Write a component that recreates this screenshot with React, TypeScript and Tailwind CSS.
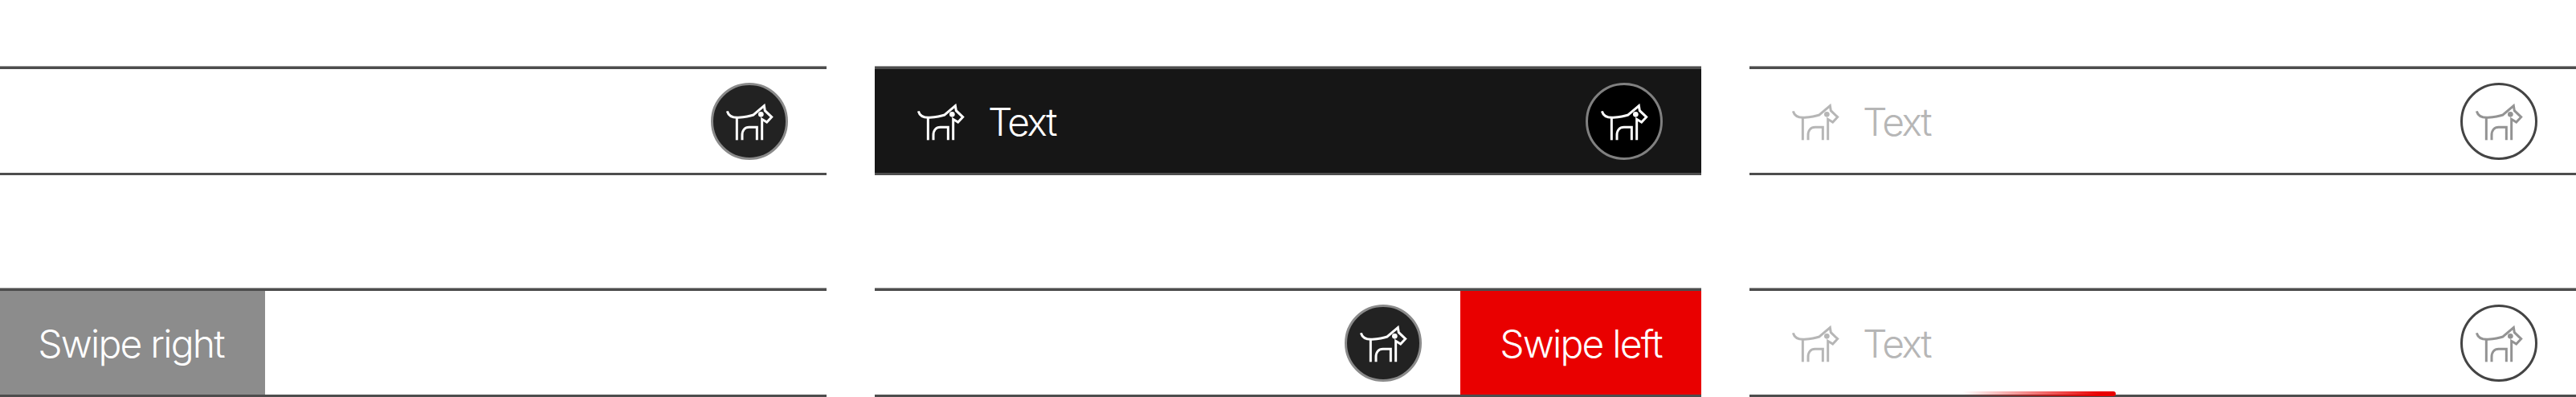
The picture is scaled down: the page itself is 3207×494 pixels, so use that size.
const Dog = ({ className }: { className: string }) => {
  return (
    <svg
      className={className}
      xmlns="http://www.w3.org/2000/svg"
      viewBox="185 170 180 144"
      width="60"
      height="48"
      fill="none"
      stroke="currentColor"
      strokeWidth="9"
    >
      <path d="M192 204 C197 222 214 229 234 228 C255 226 272 224 290 218 L330 184 L333 202 L358 226 L340 245 L322 234 V312" />
      <path d="M228 228 V312" />
      <path d="M248 312 V294 C248 275 258 264 274 264 H303 V312" />
      <circle cx="318" cy="216" r="10" fill="currentColor" stroke="none" />
    </svg>
  );
};

const Round = ({ tone }: { tone: "dark" | "black" | "light" }) => {
  const circle = {
    dark: "border-[#8a8a8a] bg-[#222222]",
    black: "border-[#808080] bg-black",
    light: "border-[#444444] bg-white",
  }[tone];
  return (
    <div
      className={`flex h-[96px] w-[96px] shrink-0 items-center justify-center rounded-full border-[3px] ${circle}`}
    >
      <Dog className={tone === "light" ? "text-[#939393]" : "text-white"} />
    </div>
  );
};

const Label = ({ dark }: { dark: boolean }) => {
  return (
    <div className="flex items-center gap-[29px]">
      <Dog className={dark ? "text-white" : "text-[#b6b6b6]"} />
      <span
        className={`pt-[2px] text-[48px] leading-none font-light tracking-[-2.5px] ${
          dark ? "text-white" : "text-[#b6b6b6]"
        }`}
      >
        Text
      </span>
    </div>
  );
};

const rowClass =
  "flex h-[135px] items-center border-y-[3px] border-[#4d4d4d] shadow-[0_-1px_0_#9a9a9a]";

export default function App() {
  return (
    <div className="h-[494px] w-[3207px] overflow-hidden bg-white pt-[83px] font-['Inter',sans-serif]">
      <div className="grid grid-cols-[1029px_1029px_1029px] gap-x-[60px] gap-y-[141px]">
        <div className={`${rowClass} justify-end pr-[48px]`}>
          <Round tone="dark" />
        </div>
        <div className={`${rowClass} justify-between bg-[#161616] pr-[48px] pl-[52px]`}>
          <Label dark />
          <Round tone="black" />
        </div>
        <div className={`${rowClass} justify-between pr-[48px] pl-[52px]`}>
          <Label dark={false} />
          <Round tone="light" />
        </div>

        <div className={rowClass}>
          <div className="flex h-full w-[330px] items-center justify-center bg-[#8c8c8c] pt-[2px] pr-[4px] text-[48px] font-light tracking-[-1.8px] text-white">
            Swipe right
          </div>
        </div>
        <div className={`${rowClass} justify-end`}>
          <Round tone="dark" />
          <div className="ml-[48px] flex h-full w-[300px] items-center justify-center bg-[#e90000] pt-[2px] text-[48px] font-light tracking-[-1.8px] text-white">
            Swipe left
          </div>
        </div>
        <div className={`${rowClass} relative justify-between pr-[48px] pl-[52px]`}>
          <Label dark={false} />
          <Round tone="light" />
          <div className="absolute top-[125px] left-[265px] h-[6px] w-[191px] rounded-r-[3px] bg-gradient-to-r from-transparent to-[#e90000] to-90%" />
        </div>
      </div>
    </div>
  );
}
